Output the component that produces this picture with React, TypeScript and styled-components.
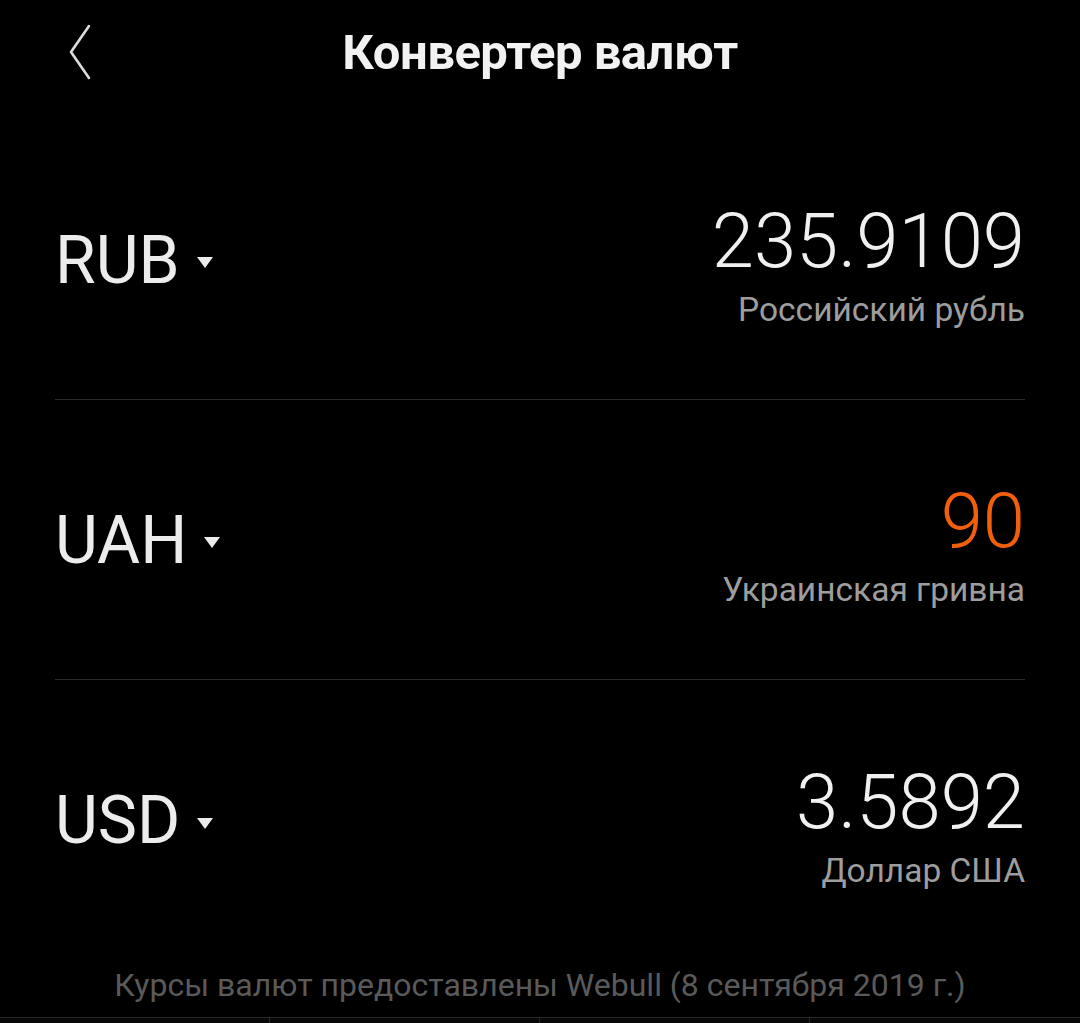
import styled, { createGlobalStyle } from "styled-components";

const GlobalStyle = createGlobalStyle`
  html, body {
    margin: 0;
    padding: 0;
    background: #000;
  }
  body {
    font-family: Roboto, "Noto Sans", "Liberation Sans", sans-serif;
  }
`;

interface Currency {
  code: string;
  amount: string;
  name: string;
  active?: boolean;
}

const currencies: Currency[] = [
  { code: "RUB", amount: "235.9109", name: "Российский рубль" },
  { code: "UAH", amount: "90", name: "Украинская гривна", active: true },
  { code: "USD", amount: "3.5892", name: "Доллар США" },
];

const Screen = styled.div`
  width: 1080px;
  height: 1023px;
  background: #000;
  display: flex;
  flex-direction: column;
  overflow: hidden;
`;

const Header = styled.header`
  height: 120px;
  flex: none;
  display: grid;
  grid-template-columns: 1fr auto 1fr;
  align-items: center;
  padding: 0 0 16px 0;
  box-sizing: border-box;
`;

const BackButton = styled.button`
  justify-self: start;
  margin-left: 62px;
  width: 36px;
  height: 60px;
  padding: 0;
  border: none;
  background: none;
  display: flex;
  align-items: center;
  justify-content: center;
  color: #dcdcdc;
`;

const Title = styled.h1`
  margin: 0;
  font-size: 49px;
  font-weight: 700;
  color: #f2f2f2;
  letter-spacing: -0.5px;
`;

const List = styled.div`
  padding: 0 55px;
  display: flex;
  flex-direction: column;
`;

const Row = styled.div`
  height: 280px;
  display: flex;
  align-items: center;
  justify-content: space-between;
  border-bottom: 1px solid #2a2a2a;
  box-sizing: border-box;

  &:last-child {
    border-bottom: none;
  }
`;

const CodePicker = styled.div`
  display: flex;
  align-items: center;
  gap: 17px;
  margin-top: 2px;
`;

const Code = styled.span`
  font-size: 66px;
  line-height: 1;
  color: #ececec;
  font-weight: 400;
`;

const Caret = styled.span`
  width: 0;
  height: 0;
  border-left: 8px solid transparent;
  border-right: 8px solid transparent;
  border-top: 11px solid #ececec;
  margin-top: 4px;
`;

const Values = styled.div`
  display: flex;
  flex-direction: column;
  align-items: flex-end;
  margin-top: 14px;
`;

const Amount = styled.span<{ $active?: boolean }>`
  font-size: 76px;
  line-height: 76px;
  font-weight: 300;
  color: ${(p) => (p.$active ? "#f25f0c" : "#f0f0f0")};
`;

const Name = styled.span`
  font-size: 33.5px;
  line-height: 40px;
  color: #9d9d9d;
  margin-top: 11px;
`;

const Footer = styled.div`
  height: 57px;
  flex: none;
  display: flex;
  align-items: center;
  justify-content: center;
  font-size: 32px;
  color: #5a5a5a;
  padding-bottom: 8px;
  box-sizing: border-box;
`;

const Keypad = styled.div`
  flex: 1;
  display: grid;
  grid-template-columns: repeat(4, 1fr);
  border-top: 1px solid #262626;
  background: #070707;
`;

const Key = styled.div`
  border-right: 1px solid #262626;

  &:last-child {
    border-right: none;
  }
`;

export default function App() {
  return (
    <>
      <GlobalStyle />
      <Screen>
        <Header>
          <BackButton aria-label="Назад">
            <svg width="36" height="60" viewBox="0 0 36 60" fill="none">
              <path
                d="M27 4 L9 30 L27 56"
                stroke="currentColor"
                strokeWidth="2.6"
                strokeLinecap="round"
                strokeLinejoin="round"
              />
            </svg>
          </BackButton>
          <Title>Конвертер валют</Title>
          <div />
        </Header>
        <List>
          {currencies.map((c) => (
            <Row key={c.code}>
              <CodePicker>
                <Code>{c.code}</Code>
                <Caret />
              </CodePicker>
              <Values>
                <Amount $active={c.active}>{c.amount}</Amount>
                <Name>{c.name}</Name>
              </Values>
            </Row>
          ))}
        </List>
        <Footer>Курсы валют предоставлены Webull (8 сентября 2019 г.)</Footer>
        <Keypad>
          <Key />
          <Key />
          <Key />
          <Key />
        </Keypad>
      </Screen>
    </>
  );
}
